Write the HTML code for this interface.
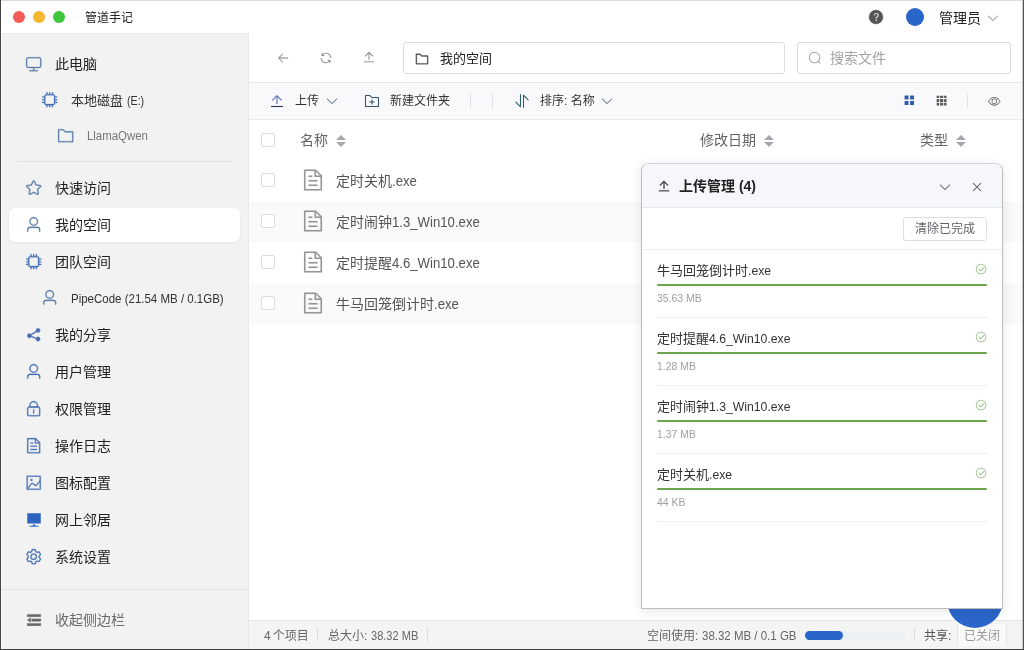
<!DOCTYPE html>
<html lang="zh-CN">
<head>
<meta charset="utf-8">
<title>管道手记</title>
<style>
*{box-sizing:border-box;margin:0;padding:0}
html,body{width:1024px;height:650px;overflow:hidden;background:#fff}
body{font-family:"Liberation Sans","Noto Sans CJK SC",sans-serif;color:#333;position:relative;font-size:13px}
.abs{position:absolute}
svg{display:block;position:absolute;overflow:visible}
.t{position:absolute;white-space:nowrap;line-height:20px;height:20px;will-change:transform}
.l{display:inline-block;transform-origin:0 50%}
.cu,.cd{position:absolute;width:0;height:0;border:5px solid transparent}
.cu{border-bottom-color:#a7a8ab;border-top-width:0}
.cd{border-top-color:#a7a8ab;border-bottom-width:0}
.cb{position:absolute;width:14px;height:14px;border:1px solid #dedede;border-radius:2px;background:#fff}
</style>
</head>
<body>
<div class="abs" style="left:0px;top:0px;width:1024px;height:650px;background:#fff"></div>
<div class="abs" style="left:1px;top:33px;width:1px;height:616px;background:#fbfbfb"></div>
<div class="abs" style="left:2px;top:33px;width:246px;height:616px;background:#f2f2f2"></div>
<div class="abs" style="left:2px;top:33px;width:246px;height:1px;background:#ececec"></div>
<div class="abs" style="left:248px;top:33px;width:1px;height:616px;background:#e9e9e9"></div>
<div class="abs" style="left:249px;top:82px;width:774px;height:1px;background:#e6e6e6"></div>
<div class="abs" style="left:249px;top:83px;width:774px;height:36px;background:#f9f9fb"></div>
<div class="abs" style="left:249px;top:119px;width:774px;height:1px;background:#e9e9e9"></div>
<div class="abs" style="left:249px;top:202px;width:774px;height:39.5px;background:#fafafa"></div>
<div class="abs" style="left:249px;top:283.5px;width:774px;height:40px;background:#fafafa"></div>
<div class="abs" style="left:249px;top:620px;width:774px;height:29px;background:#f4f4f4;border-top:1px solid #e4e4e4"></div>
<div class="abs" style="left:13px;top:11px;width:12px;height:12px;border-radius:50%;background:#f25b57"></div>
<div class="abs" style="left:33px;top:11px;width:12px;height:12px;border-radius:50%;background:#f6b62d"></div>
<div class="abs" style="left:53px;top:11px;width:12px;height:12px;border-radius:50%;background:#3ec63c"></div>
<div class="t" style="left:85px;top:7.5px;font-size:12px;color:#222;">管道手记</div>
<svg style="left:868px;top:9px" width="16" height="16" viewBox="0 0 1024 1024" fill="#555" stroke="#555" stroke-width="22" stroke-linejoin="round"><path d="M512 64a448 448 0 1 1 0 896 448 448 0 0 1 0-896m23.744 191.488c-52.096 0-92.928 14.784-123.2 44.352-30.976 29.568-45.76 70.4-45.76 122.496h80.256c0-29.568 5.632-52.8 17.6-68.992 13.376-19.712 35.2-28.864 66.176-28.864 23.936 0 42.944 6.336 56.32 19.712 12.672 13.376 19.712 31.68 19.712 54.912 0 17.6-6.336 34.496-19.008 49.984l-8.448 9.856c-45.76 40.832-73.216 70.4-82.368 89.408-9.856 19.008-14.08 42.24-14.08 68.992v9.856h80.96v-9.856c0-16.896 3.52-31.68 10.56-45.76 6.336-12.672 15.488-24.64 28.16-35.2 33.792-29.568 54.208-48.576 60.544-55.616 16.896-22.528 26.048-51.392 26.048-86.592 0-42.944-14.08-76.736-42.24-101.376-28.16-25.344-65.472-37.312-111.232-37.312zm-12.672 406.208a54.272 54.272 0 0 0-38.72 14.784 49.408 49.408 0 0 0-15.488 38.016c0 15.488 4.928 28.16 15.488 38.016A54.848 54.848 0 0 0 523.072 768c15.488 0 28.16-4.928 38.72-14.784a51.52 51.52 0 0 0 16.192-38.72 51.968 51.968 0 0 0-15.488-38.016 55.936 55.936 0 0 0-39.424-14.784z"/></svg>
<div class="abs" style="left:906px;top:8px;width:18px;height:18px;border-radius:50%;background:#2a66c9"></div>
<div class="t" style="left:939px;top:7.5px;font-size:14px;color:#222;">管理员</div>
<svg style="left:986px;top:10.5px" width="14" height="14" viewBox="0 0 1024 1024" fill="#8c8c8c" stroke="#8c8c8c" stroke-width="4" stroke-linejoin="round"><path d="M831.872 340.864 512 652.672 192.128 340.864a30.592 30.592 0 0 0-42.752 0 29.12 29.12 0 0 0 0 41.6L489.664 714.24a32 32 0 0 0 44.672 0l340.288-331.712a29.12 29.12 0 0 0 0-41.728 30.592 30.592 0 0 0-42.752 0z"/></svg>
<div class="abs" style="left:9px;top:207.5px;width:231px;height:34px;background:#fff;border-radius:6px;box-shadow:0 1px 3px rgba(0,0,0,.06)"></div>
<svg style="left:25.3px;top:55.3px" width="17.4" height="17.4" viewBox="0 0 1024 1024" fill="#5b7ea8" stroke="#5b7ea8" stroke-width="16" stroke-linejoin="round"><path d="M544 768v128h192a32 32 0 1 1 0 64H288a32 32 0 1 1 0-64h192V768H192A128 128 0 0 1 64 640V256a128 128 0 0 1 128-128h640a128 128 0 0 1 128 128v384a128 128 0 0 1-128 128zM192 192a64 64 0 0 0-64 64v384a64 64 0 0 0 64 64h640a64 64 0 0 0 64-64V256a64 64 0 0 0-64-64z"/></svg>
<div class="t" style="left:55px;top:54px;font-size:14px;color:#222;">此电脑</div>
<svg style="left:41.3px;top:91.3px" width="17.4" height="17.4" viewBox="0 0 1024 1024" fill="#4c74b8" stroke="#4c74b8" stroke-width="16" stroke-linejoin="round"><path d="M320 256a64 64 0 0 0-64 64v384a64 64 0 0 0 64 64h384a64 64 0 0 0 64-64V320a64 64 0 0 0-64-64zm0-64h384a128 128 0 0 1 128 128v384a128 128 0 0 1-128 128H320a128 128 0 0 1-128-128V320a128 128 0 0 1 128-128"/><path d="M512 64a32 32 0 0 1 32 32v128h-64V96a32 32 0 0 1 32-32m160 0a32 32 0 0 1 32 32v128h-64V96a32 32 0 0 1 32-32m-320 0a32 32 0 0 1 32 32v128h-64V96a32 32 0 0 1 32-32m160 896a32 32 0 0 1-32-32V800h64v128a32 32 0 0 1-32 32m160 0a32 32 0 0 1-32-32V800h64v128a32 32 0 0 1-32 32m-320 0a32 32 0 0 1-32-32V800h64v128a32 32 0 0 1-32 32M64 512a32 32 0 0 1 32-32h128v64H96a32 32 0 0 1-32-32m0-160a32 32 0 0 1 32-32h128v64H96a32 32 0 0 1-32-32m0 320a32 32 0 0 1 32-32h128v64H96a32 32 0 0 1-32-32m896-160a32 32 0 0 1-32 32H800v-64h128a32 32 0 0 1 32 32m0-160a32 32 0 0 1-32 32H800v-64h128a32 32 0 0 1 32 32m0 320a32 32 0 0 1-32 32H800v-64h128a32 32 0 0 1 32 32"/></svg>
<div class="t" style="left:71px;top:90.5px;font-size:13px;color:#333;">本地磁盘 <span class="l" style="transform:scaleX(0.82)">(E:)</span></div>
<svg style="left:57.3px;top:127.3px" width="17.4" height="17.4" viewBox="0 0 1024 1024" fill="#5b7ea8" stroke="#5b7ea8" stroke-width="16" stroke-linejoin="round"><path d="M128 192v640h768V320H485.76L357.504 192zm-32-64h287.872l128.384 128H928a32 32 0 0 1 32 32v576a32 32 0 0 1-32 32H96a32 32 0 0 1-32-32V160a32 32 0 0 1 32-32"/></svg>
<div class="t" style="left:87px;top:126px;font-size:12px;color:#777;"><span class="l" style="transform:scaleX(0.95)">LlamaQwen</span></div>
<div class="abs" style="left:17px;top:161px;width:215px;height:1px;background:#e2e2e2"></div>
<svg style="left:25.3px;top:179.3px" width="17.4" height="17.4" viewBox="0 0 1024 1024" fill="#5b7ea8" stroke="#5b7ea8" stroke-width="16" stroke-linejoin="round"><path d="m512 747.84 228.16 119.936a6.4 6.4 0 0 0 9.28-6.72l-43.52-254.08 184.512-179.904a6.4 6.4 0 0 0-3.52-10.88l-255.104-37.12L517.76 147.904a6.4 6.4 0 0 0-11.52 0L392.192 379.072l-255.104 37.12a6.4 6.4 0 0 0-3.52 10.88L318.08 606.976l-43.584 254.08a6.4 6.4 0 0 0 9.28 6.72zM313.6 924.48a70.4 70.4 0 0 1-102.144-74.24l37.888-220.928L88.96 472.96A70.4 70.4 0 0 1 128 352.896l221.76-32.256 99.2-200.96a70.4 70.4 0 0 1 126.208 0l99.2 200.96 221.824 32.256a70.4 70.4 0 0 1 39.04 120.064L774.72 629.376l37.888 220.928a70.4 70.4 0 0 1-102.144 74.24L512 820.096l-198.4 104.32z"/></svg>
<div class="t" style="left:55px;top:178px;font-size:14px;color:#222;">快速访问</div>
<svg style="left:25.3px;top:216.3px" width="17.4" height="17.4" viewBox="0 0 1024 1024" fill="#5b7ea8" stroke="#5b7ea8" stroke-width="16" stroke-linejoin="round"><path d="M512 512a192 192 0 1 0 0-384 192 192 0 0 0 0 384m0 64a256 256 0 1 1 0-512 256 256 0 0 1 0 512m320 320v-96a96 96 0 0 0-96-96H288a96 96 0 0 0-96 96v96a32 32 0 1 1-64 0v-96a160 160 0 0 1 160-160h448a160 160 0 0 1 160 160v96a32 32 0 1 1-64 0"/></svg>
<div class="t" style="left:55px;top:215px;font-size:14px;color:#222;">我的空间</div>
<svg style="left:25.3px;top:253.3px" width="17.4" height="17.4" viewBox="0 0 1024 1024" fill="#4c74b8" stroke="#4c74b8" stroke-width="16" stroke-linejoin="round"><path d="M320 256a64 64 0 0 0-64 64v384a64 64 0 0 0 64 64h384a64 64 0 0 0 64-64V320a64 64 0 0 0-64-64zm0-64h384a128 128 0 0 1 128 128v384a128 128 0 0 1-128 128H320a128 128 0 0 1-128-128V320a128 128 0 0 1 128-128"/><path d="M512 64a32 32 0 0 1 32 32v128h-64V96a32 32 0 0 1 32-32m160 0a32 32 0 0 1 32 32v128h-64V96a32 32 0 0 1 32-32m-320 0a32 32 0 0 1 32 32v128h-64V96a32 32 0 0 1 32-32m160 896a32 32 0 0 1-32-32V800h64v128a32 32 0 0 1-32 32m160 0a32 32 0 0 1-32-32V800h64v128a32 32 0 0 1-32 32m-320 0a32 32 0 0 1-32-32V800h64v128a32 32 0 0 1-32 32M64 512a32 32 0 0 1 32-32h128v64H96a32 32 0 0 1-32-32m0-160a32 32 0 0 1 32-32h128v64H96a32 32 0 0 1-32-32m0 320a32 32 0 0 1 32-32h128v64H96a32 32 0 0 1-32-32m896-160a32 32 0 0 1-32 32H800v-64h128a32 32 0 0 1 32 32m0-160a32 32 0 0 1-32 32H800v-64h128a32 32 0 0 1 32 32m0 320a32 32 0 0 1-32 32H800v-64h128a32 32 0 0 1 32 32"/></svg>
<div class="t" style="left:55px;top:252px;font-size:14px;color:#222;">团队空间</div>
<svg style="left:41.3px;top:289.3px" width="17.4" height="17.4" viewBox="0 0 1024 1024" fill="#5b7ea8" stroke="#5b7ea8" stroke-width="16" stroke-linejoin="round"><path d="M512 512a192 192 0 1 0 0-384 192 192 0 0 0 0 384m0 64a256 256 0 1 1 0-512 256 256 0 0 1 0 512m320 320v-96a96 96 0 0 0-96-96H288a96 96 0 0 0-96 96v96a32 32 0 1 1-64 0v-96a160 160 0 0 1 160-160h448a160 160 0 0 1 160 160v96a32 32 0 1 1-64 0"/></svg>
<div class="t" style="left:71px;top:288.5px;font-size:13px;color:#333;"><span class="l" style="transform:scaleX(0.884)">PipeCode (21.54 MB / 0.1GB)</span></div>
<svg style="left:25.3px;top:326.3px" width="17.4" height="17.4" viewBox="0 0 1024 1024" fill="#4a6fb0" stroke="#4a6fb0" stroke-width="16" stroke-linejoin="round"><path d="m679.872 348.8-301.76 188.608a127.808 127.808 0 0 1 5.12 52.16l279.936 104.96a128 128 0 1 1-22.464 59.904l-279.872-104.96a128 128 0 1 1-16.64-166.272l301.696-188.608a128 128 0 1 1 33.92 54.272z"/></svg>
<div class="t" style="left:55px;top:325px;font-size:14px;color:#222;">我的分享</div>
<svg style="left:25.3px;top:363.3px" width="17.4" height="17.4" viewBox="0 0 1024 1024" fill="#4c74b8" stroke="#4c74b8" stroke-width="16" stroke-linejoin="round"><path d="M512 512a192 192 0 1 0 0-384 192 192 0 0 0 0 384m0 64a256 256 0 1 1 0-512 256 256 0 0 1 0 512m320 320v-96a96 96 0 0 0-96-96H288a96 96 0 0 0-96 96v96a32 32 0 1 1-64 0v-96a160 160 0 0 1 160-160h448a160 160 0 0 1 160 160v96a32 32 0 1 1-64 0"/></svg>
<div class="t" style="left:55px;top:362px;font-size:14px;color:#222;">用户管理</div>
<svg style="left:25.3px;top:400.3px" width="17.4" height="17.4" viewBox="0 0 1024 1024" fill="#4c74b8" stroke="#4c74b8" stroke-width="16" stroke-linejoin="round"><path d="M224 448a32 32 0 0 0-32 32v384a32 32 0 0 0 32 32h576a32 32 0 0 0 32-32V480a32 32 0 0 0-32-32zm0-64h576a96 96 0 0 1 96 96v384a96 96 0 0 1-96 96H224a96 96 0 0 1-96-96V480a96 96 0 0 1 96-96"/><path d="M512 544a32 32 0 0 1 32 32v192a32 32 0 1 1-64 0V576a32 32 0 0 1 32-32m192-160v-64a192 192 0 1 0-384 0v64zM512 64a256 256 0 0 1 256 256v128H256V320A256 256 0 0 1 512 64"/></svg>
<div class="t" style="left:55px;top:399px;font-size:14px;color:#222;">权限管理</div>
<svg style="left:25.3px;top:437.3px" width="17.4" height="17.4" viewBox="0 0 1024 1024" fill="#4c74b8" stroke="#4c74b8" stroke-width="16" stroke-linejoin="round"><path d="M832 384H576V128H192v768h640zm-26.496-64L640 154.496V320zM160 64h480l256 256v608a32 32 0 0 1-32 32H160a32 32 0 0 1-32-32V96a32 32 0 0 1 32-32m160 448h384v64H320zm0-192h160v64H320zm0 384h384v64H320z"/></svg>
<div class="t" style="left:55px;top:436px;font-size:14px;color:#222;">操作日志</div>
<svg style="left:25.3px;top:474.3px" width="17.4" height="17.4" viewBox="0 0 1024 1024" fill="#4c74b8" stroke="#4c74b8" stroke-width="16" stroke-linejoin="round"><path d="M160 160v704h704V160zm-32-64h768a32 32 0 0 1 32 32v768a32 32 0 0 1-32 32H128a32 32 0 0 1-32-32V128a32 32 0 0 1 32-32"/><path d="M384 288q64 0 64 64t-64 64q-64 0-64-64t64-64M185.408 876.992l-50.816-38.912L350.72 556.032a96 96 0 0 1 134.592-17.856l1.856 1.472 122.88 99.136a32 32 0 0 0 44.992-4.864l216-269.888 49.92 39.936-215.808 269.824-.256.32a96 96 0 0 1-135.04 14.464l-122.88-99.072-.64-.512a32 32 0 0 0-44.8 5.952z"/></svg>
<div class="t" style="left:55px;top:473px;font-size:14px;color:#222;">图标配置</div>
<svg style="left:25px;top:511px" width="18" height="18" viewBox="0 0 1024 1024" fill="#2d64c0" stroke="#2d64c0" stroke-width="0" stroke-linejoin="round"><path d="M448 832v-64h128v64h192v64H256v-64zM128 704V128h768v576z"/></svg>
<div class="t" style="left:55px;top:510px;font-size:14px;color:#222;">网上邻居</div>
<svg style="left:25.3px;top:548.3px" width="17.4" height="17.4" viewBox="0 0 1024 1024" fill="#4c74b8" stroke="#4c74b8" stroke-width="16" stroke-linejoin="round"><path d="M600.704 64a32 32 0 0 1 30.464 22.208l35.2 109.376c14.784 7.232 28.928 15.36 42.432 24.512l112.384-24.192a32 32 0 0 1 34.432 15.36L944.32 364.8a32 32 0 0 1-4.032 37.504l-77.12 85.12a357.12 357.12 0 0 1 0 49.024l77.12 85.248a32 32 0 0 1 4.032 37.504l-88.704 153.6a32 32 0 0 1-34.432 15.296L708.8 803.904c-13.44 9.088-27.648 17.28-42.368 24.512l-35.264 109.376A32 32 0 0 1 600.704 960H423.296a32 32 0 0 1-30.464-22.208L357.696 828.48a351.616 351.616 0 0 1-42.56-24.64l-112.32 24.256a32 32 0 0 1-34.432-15.36L79.68 659.2a32 32 0 0 1 4.032-37.504l77.12-85.248a357.12 357.12 0 0 1 0-48.896l-77.12-85.248A32 32 0 0 1 79.68 364.8l88.704-153.6a32 32 0 0 1 34.432-15.296l112.32 24.256c13.568-9.152 27.776-17.408 42.56-24.64l35.2-109.312A32 32 0 0 1 423.232 64H600.64zm-23.424 64H446.72l-36.352 113.088-24.512 11.968a294.113 294.113 0 0 0-34.816 20.096l-22.656 15.36-116.224-25.088-65.28 113.152 79.68 88.192-1.92 27.136a293.12 293.12 0 0 0 0 40.192l1.92 27.136-79.808 88.192 65.344 113.152 116.224-25.024 22.656 15.296a294.113 294.113 0 0 0 34.816 20.096l24.512 11.968L446.72 896h130.688l36.48-113.152 24.448-11.904a288.282 288.282 0 0 0 34.752-20.096l22.592-15.296 116.288 25.024 65.28-113.152-79.744-88.192 1.92-27.136a293.12 293.12 0 0 0 0-40.256l-1.92-27.136 79.808-88.128-65.344-113.152-116.288 24.96-22.592-15.232a287.616 287.616 0 0 0-34.752-20.096l-24.448-11.904L577.344 128zM512 320a192 192 0 1 1 0 384 192 192 0 0 1 0-384m0 64a128 128 0 1 0 0 256 128 128 0 0 0 0-256"/></svg>
<div class="t" style="left:55px;top:547px;font-size:14px;color:#222;">系统设置</div>
<div class="abs" style="left:1px;top:589px;width:247px;height:1px;background:#e2e2e2"></div>
<svg style="left:25px;top:611px" width="18" height="18" viewBox="0 0 1024 1024" fill="#666" stroke="#666" stroke-width="22" stroke-linejoin="round"><path d="M896 192H128v128h768zm0 256H384v128h512zm0 256H128v128h768zM320 384 128 512l192 128z"/></svg>
<div class="t" style="left:55px;top:610px;font-size:14px;color:#6a6a6a;">收起侧边栏</div>
<svg style="left:276px;top:51px" width="14" height="14" viewBox="0 0 1024 1024" fill="#8a8a8a" stroke="#8a8a8a" stroke-width="6" stroke-linejoin="round"><path d="M224 480h640a32 32 0 1 1 0 64H224a32 32 0 0 1 0-64"/><path d="m237.248 512 265.408 265.344a32 32 0 0 1-45.312 45.312l-288-288a32 32 0 0 1 0-45.312l288-288a32 32 0 1 1 45.312 45.312z"/></svg>
<svg style="left:319px;top:51px" width="14" height="14" viewBox="0 0 1024 1024" fill="#8a8a8a" stroke="#8a8a8a" stroke-width="6" stroke-linejoin="round"><path d="M771.776 794.88A384 384 0 0 1 128 512h64a320 320 0 0 0 555.712 216.448H654.72a32 32 0 1 1 0-64h149.056a32 32 0 0 1 32 32v148.928a32 32 0 1 1-64 0v-50.56zM276.288 295.616h92.992a32 32 0 0 1 0 64H220.16a32 32 0 0 1-32-32V178.56a32 32 0 0 1 64 0v50.56A384 384 0 0 1 896.128 512h-64a320 320 0 0 0-555.776-216.384z"/></svg>
<svg style="left:362px;top:50px" width="14" height="14" viewBox="0 0 1024 1024" fill="#8a8a8a" stroke="#8a8a8a" stroke-width="6" stroke-linejoin="round"><path d="M160 832h704a32 32 0 1 1 0 64H160a32 32 0 1 1 0-64m384-578.304V704h-64V247.296L237.248 490.048 192 444.8 508.8 128l316.8 316.8-45.312 45.248z"/></svg>
<div class="abs" style="left:403px;top:42px;width:382px;height:32px;border:1px solid #dcdcdc;border-radius:3px;background:#fff"></div>
<svg style="left:415px;top:51.5px" width="14" height="14" viewBox="0 0 1024 1024" fill="#444" stroke="#444" stroke-width="22" stroke-linejoin="round"><path d="M128 192v640h768V320H485.76L357.504 192zm-32-64h287.872l128.384 128H928a32 32 0 0 1 32 32v576a32 32 0 0 1-32 32H96a32 32 0 0 1-32-32V160a32 32 0 0 1 32-32"/></svg>
<div class="t" style="left:440px;top:48.5px;font-size:13px;color:#222;">我的空间</div>
<div class="abs" style="left:797px;top:42px;width:214px;height:32px;border:1px solid #dcdcdc;border-radius:3px;background:#fff"></div>
<svg style="left:808px;top:51px" width="14" height="14" viewBox="0 0 1024 1024" fill="#a0a0a0" stroke="#a0a0a0" stroke-width="0" stroke-linejoin="round"><path d="m795.904 750.72 124.992 124.928a32 32 0 0 1-45.248 45.248L750.656 795.904a416 416 0 1 1 45.248-45.248zM480 832a352 352 0 1 0 0-704 352 352 0 0 0 0 704"/></svg>
<div class="t" style="left:830px;top:48px;font-size:14px;color:#a3a3a3;">搜索文件</div>
<svg style="left:269px;top:93px" width="16" height="16" viewBox="0 0 1024 1024" fill="#5873b4" stroke="#5873b4" stroke-width="8" stroke-linejoin="round"><path d="M544 253.696V704h-64V247.296L237.248 490.048 192 444.8 508.8 128l316.8 316.8-45.312 45.248z"/></svg>
<svg style="left:269px;top:93px" width="16" height="16" viewBox="0 0 1024 1024" fill="#2a3a5a" stroke="#2a3a5a" stroke-width="8" stroke-linejoin="round"><path d="M160 832h704a32 32 0 1 1 0 64H160a32 32 0 1 1 0-64"/></svg>
<div class="t" style="left:295px;top:91.4px;font-size:12px;color:#333;">上传</div>
<svg style="left:325px;top:94px" width="14" height="14" viewBox="0 0 1024 1024" fill="#5a6a7a" stroke="#5a6a7a" stroke-width="6" stroke-linejoin="round"><path d="M831.872 340.864 512 652.672 192.128 340.864a30.592 30.592 0 0 0-42.752 0 29.12 29.12 0 0 0 0 41.6L489.664 714.24a32 32 0 0 0 44.672 0l340.288-331.712a29.12 29.12 0 0 0 0-41.728 30.592 30.592 0 0 0-42.752 0z"/></svg>
<svg style="left:363.5px;top:93px" width="16" height="16" viewBox="0 0 1024 1024" fill="#3b5568" stroke="#3b5568" stroke-width="4" stroke-linejoin="round"><path d="M128 192v640h768V320H485.76L357.504 192zm-32-64h287.872l128.384 128H928a32 32 0 0 1 32 32v576a32 32 0 0 1-32 32H96a32 32 0 0 1-32-32V160a32 32 0 0 1 32-32m384 416V416h64v128h128v64H544v128h-64V608H352v-64z"/></svg>
<div class="t" style="left:389.6px;top:91.4px;font-size:12px;color:#333;">新建文件夹</div>
<div class="abs" style="left:470px;top:93px;width:1px;height:16px;background:#e0e2e6"></div>
<div class="abs" style="left:492px;top:93px;width:1px;height:16px;background:#e0e2e6"></div>
<svg style="left:514px;top:93px" width="16" height="16" viewBox="0 0 1024 1024" fill="#2f6072" stroke="#2f6072" stroke-width="4" stroke-linejoin="round"><path d="M384 96a32 32 0 0 1 64 0v786.752a32 32 0 0 1-54.592 22.656L95.936 608a32 32 0 0 1 0-45.312h.128a32 32 0 0 1 45.184 0L384 805.632zm192 45.248a32 32 0 0 1 54.592-22.592L928.064 416a32 32 0 0 1 0 45.312h-.128a32 32 0 0 1-45.184 0L640 218.496V928a32 32 0 1 1-64 0z"/></svg>
<div class="t" style="left:539.5px;top:91.4px;font-size:12px;color:#333;">排序: 名称</div>
<svg style="left:600px;top:94px" width="14" height="14" viewBox="0 0 1024 1024" fill="#5a6a7a" stroke="#5a6a7a" stroke-width="6" stroke-linejoin="round"><path d="M831.872 340.864 512 652.672 192.128 340.864a30.592 30.592 0 0 0-42.752 0 29.12 29.12 0 0 0 0 41.6L489.664 714.24a32 32 0 0 0 44.672 0l340.288-331.712a29.12 29.12 0 0 0 0-41.728 30.592 30.592 0 0 0-42.752 0z"/></svg>
<svg style="left:902.7px;top:94.4px" width="12.6" height="12.6" viewBox="0 0 1024 1024" fill="#2e5cab" stroke="#2e5cab" stroke-width="0" stroke-linejoin="round"><path d="M160 448a32 32 0 0 1-32-32V160.064a32 32 0 0 1 32-32h256a32 32 0 0 1 32 32V416a32 32 0 0 1-32 32zm448 0a32 32 0 0 1-32-32V160.064a32 32 0 0 1 32-32h255.936a32 32 0 0 1 32 32V416a32 32 0 0 1-32 32zM160 896a32 32 0 0 1-32-32V608a32 32 0 0 1 32-32h256a32 32 0 0 1 32 32v256a32 32 0 0 1-32 32zm448 0a32 32 0 0 1-32-32V608a32 32 0 0 1 32-32h255.936a32 32 0 0 1 32 32v256a32 32 0 0 1-32 32z"/></svg>
<svg style="left:935.4px;top:94.2px" width="13.2" height="13.2" viewBox="0 0 1024 1024" fill="#5c5c5c" stroke="#5c5c5c" stroke-width="0" stroke-linejoin="round"><path d="M640 384v256H384V384zm64 0h192v256H704zm-64 512H384V704h256zm64 0V704h192v192zm-64-768v192H384V128zm64 0h192v192H704zM320 384v256H128V384zm0 512H128V704h192zm0-768v192H128V128z"/></svg>
<div class="abs" style="left:967px;top:94px;width:1px;height:14px;background:#e0e2e6"></div>
<svg style="left:987.7px;top:94.5px" width="12.6" height="12.6" viewBox="0 0 1024 1024" fill="#666" stroke="#666" stroke-width="0" stroke-linejoin="round"><path d="M512 160c320 0 512 352 512 352S832 864 512 864 0 512 0 512s192-352 512-352m0 64c-225.28 0-384.128 208.064-436.8 288 52.608 79.872 211.456 288 436.8 288 225.28 0 384.128-208.064 436.8-288-52.608-79.872-211.456-288-436.8-288zm0 64a224 224 0 1 1 0 448 224 224 0 0 1 0-448m0 64a160.192 160.192 0 0 0-160 160c0 88.192 71.744 160 160 160s160-71.808 160-160-71.744-160-160-160"/></svg>
<div class="cb" style="left:261px;top:133px"></div>
<div class="t" style="left:300px;top:129.5px;font-size:14px;color:#636363;">名称</div>
<div class="cu" style="left:336px;top:134.5px"></div><div class="cd" style="left:336px;top:141.5px"></div>
<div class="t" style="left:700px;top:129.5px;font-size:14px;color:#636363;">修改日期</div>
<div class="cu" style="left:764px;top:134.5px"></div><div class="cd" style="left:764px;top:141.5px"></div>
<div class="t" style="left:920px;top:129.5px;font-size:14px;color:#636363;">类型</div>
<div class="cu" style="left:956px;top:134.5px"></div><div class="cd" style="left:956px;top:141.5px"></div>
<div class="cb" style="left:261px;top:173px"></div>
<svg style="left:300.5px;top:168px" width="24" height="24" viewBox="0 0 1024 1024" fill="#979797" stroke="#979797" stroke-width="6" stroke-linejoin="round"><path d="M832 384H576V128H192v768h640zm-26.496-64L640 154.496V320zM160 64h480l256 256v608a32 32 0 0 1-32 32H160a32 32 0 0 1-32-32V96a32 32 0 0 1 32-32m160 448h384v64H320zm0-192h160v64H320zm0 384h384v64H320z"/></svg>
<div class="t" style="left:336px;top:171px;font-size:14px;color:#555;">定时关机<span class="l" style="transform:scaleX(0.94)">.exe</span></div>
<div class="cb" style="left:261px;top:214px"></div>
<svg style="left:300.5px;top:209px" width="24" height="24" viewBox="0 0 1024 1024" fill="#979797" stroke="#979797" stroke-width="6" stroke-linejoin="round"><path d="M832 384H576V128H192v768h640zm-26.496-64L640 154.496V320zM160 64h480l256 256v608a32 32 0 0 1-32 32H160a32 32 0 0 1-32-32V96a32 32 0 0 1 32-32m160 448h384v64H320zm0-192h160v64H320zm0 384h384v64H320z"/></svg>
<div class="t" style="left:336px;top:212px;font-size:14px;color:#555;">定时闹钟<span class="l" style="transform:scaleX(0.94)">1.3_Win10.exe</span></div>
<div class="cb" style="left:261px;top:255px"></div>
<svg style="left:300.5px;top:250px" width="24" height="24" viewBox="0 0 1024 1024" fill="#979797" stroke="#979797" stroke-width="6" stroke-linejoin="round"><path d="M832 384H576V128H192v768h640zm-26.496-64L640 154.496V320zM160 64h480l256 256v608a32 32 0 0 1-32 32H160a32 32 0 0 1-32-32V96a32 32 0 0 1 32-32m160 448h384v64H320zm0-192h160v64H320zm0 384h384v64H320z"/></svg>
<div class="t" style="left:336px;top:253px;font-size:14px;color:#555;">定时提醒<span class="l" style="transform:scaleX(0.94)">4.6_Win10.exe</span></div>
<div class="cb" style="left:261px;top:296px"></div>
<svg style="left:300.5px;top:291px" width="24" height="24" viewBox="0 0 1024 1024" fill="#979797" stroke="#979797" stroke-width="6" stroke-linejoin="round"><path d="M832 384H576V128H192v768h640zm-26.496-64L640 154.496V320zM160 64h480l256 256v608a32 32 0 0 1-32 32H160a32 32 0 0 1-32-32V96a32 32 0 0 1 32-32m160 448h384v64H320zm0-192h160v64H320zm0 384h384v64H320z"/></svg>
<div class="t" style="left:336px;top:294px;font-size:14px;color:#555;">牛马回笼倒计时<span class="l" style="transform:scaleX(0.94)">.exe</span></div>
<div class="t" style="left:263.5px;top:625.8px;font-size:12px;color:#666;"><span style="letter-spacing:-.6px">4 </span>个项目</div>
<div class="abs" style="left:317px;top:628px;width:1px;height:14px;background:#ddd"></div>
<div class="t" style="left:328px;top:625.8px;font-size:12px;color:#666;">总大小: <span class="l" style="transform:scaleX(0.92)">38.32 MB</span></div>
<div class="abs" style="left:427px;top:628px;width:1px;height:14px;background:#ddd"></div>
<div class="t" style="left:647px;top:625.8px;font-size:12px;color:#666;">空间使用: <span class="l" style="transform:scaleX(0.957)">38.32 MB / 0.1 GB</span></div>
<div class="abs" style="left:805px;top:630.5px;width:100px;height:9px;background:#eceff4;border-radius:5px"></div>
<div class="abs" style="left:805px;top:630.5px;width:38px;height:9px;background:#2a66c9;border-radius:5px"></div>
<div class="abs" style="left:914px;top:628px;width:1px;height:14px;background:#ddd"></div>
<div class="t" style="left:924px;top:625.8px;font-size:12px;color:#555;">共享:</div>
<div class="abs" style="left:957px;top:624px;width:50px;height:22px;background:#f8f8f8;border-left:1px solid #e6e6e6;border-right:1px solid #e6e6e6"></div>
<div class="t" style="left:964px;top:625.8px;font-size:12px;color:#999;">已关闭</div>
<div class="abs" style="left:947px;top:572px;width:56px;height:56px;border-radius:50%;background:#2a66c9"></div>
<div class="abs" style="left:641px;top:163px;width:362px;height:446px;background:#fff;border:1px solid #bebebe;border-top-color:#d2d4d8;border-radius:8px 8px 0 0;box-shadow:0 2px 12px rgba(0,0,0,.10)"></div>
<div class="abs" style="left:642px;top:164px;width:360px;height:43px;background:#f5f7fa;border-radius:7px 7px 0 0"></div>
<div class="abs" style="left:642px;top:207px;width:360px;height:1px;background:#e4e7ed"></div>
<svg style="left:657px;top:179.3px" width="14" height="14" viewBox="0 0 1024 1024" fill="#333" stroke="#333" stroke-width="22" stroke-linejoin="round"><path d="M160 832h704a32 32 0 1 1 0 64H160a32 32 0 1 1 0-64m384-578.304V704h-64V247.296L237.248 490.048 192 444.8 508.8 128l316.8 316.8-45.312 45.248z"/></svg>
<div class="t" style="left:679px;top:176.3px;font-size:14px;color:#222;font-weight:bold">上传管理 (4)</div>
<svg style="left:938px;top:180px" width="14" height="14" viewBox="0 0 1024 1024" fill="#555" stroke="#555" stroke-width="8" stroke-linejoin="round"><path d="M831.872 340.864 512 652.672 192.128 340.864a30.592 30.592 0 0 0-42.752 0 29.12 29.12 0 0 0 0 41.6L489.664 714.24a32 32 0 0 0 44.672 0l340.288-331.712a29.12 29.12 0 0 0 0-41.728 30.592 30.592 0 0 0-42.752 0z"/></svg>
<svg style="left:970.3px;top:180px" width="14" height="14" viewBox="0 0 1024 1024" fill="#555" stroke="#555" stroke-width="8" stroke-linejoin="round"><path d="M764.288 214.592 512 466.88 259.712 214.592a31.936 31.936 0 0 0-45.12 45.12L466.752 512 214.528 764.224a31.936 31.936 0 1 0 45.12 45.184L512 557.184l252.288 252.288a31.936 31.936 0 0 0 45.12-45.12L557.12 512.064l252.288-252.352a31.936 31.936 0 1 0-45.12-45.184z"/></svg>
<div class="abs" style="left:903px;top:217px;width:84px;height:24px;border:1px solid #dcdfe6;border-radius:3px;background:#fff"></div>
<div class="t" style="left:915px;top:219.2px;font-size:12px;color:#606266;">清除已完成</div>
<div class="abs" style="left:642px;top:249px;width:360px;height:1px;background:#eeeeee"></div>
<div class="t" style="left:657px;top:261.3px;font-size:13px;color:#333;">牛马回笼倒计时<span class="l" style="transform:scaleX(0.94)">.exe</span></div>
<svg style="left:975px;top:263px" width="12" height="12" viewBox="0 0 1024 1024" fill="#8db877" stroke="#8db877" stroke-width="0" stroke-linejoin="round"><path d="M512 896a384 384 0 1 0 0-768 384 384 0 0 0 0 768m0 64a448 448 0 1 1 0-896 448 448 0 0 1 0 896"/><path d="M745.344 361.344a32 32 0 0 1 45.312 45.312l-288 288a32 32 0 0 1-45.312 0l-160-160a32 32 0 1 1 45.312-45.312L480 626.752l265.344-265.408z"/></svg>
<div class="abs" style="left:657px;top:284px;width:330px;height:2px;background:#6ba64f;border-radius:1px"></div>
<div class="t" style="left:657px;top:288px;font-size:11px;color:#a0a0a0;"><span class="l" style="transform:scaleX(0.95)">35.63 MB</span></div>
<div class="abs" style="left:657px;top:317px;width:330px;height:1px;background:#efefef"></div>
<div class="t" style="left:657px;top:329.3px;font-size:13px;color:#333;">定时提醒<span class="l" style="transform:scaleX(0.94)">4.6_Win10.exe</span></div>
<svg style="left:975px;top:331px" width="12" height="12" viewBox="0 0 1024 1024" fill="#8db877" stroke="#8db877" stroke-width="0" stroke-linejoin="round"><path d="M512 896a384 384 0 1 0 0-768 384 384 0 0 0 0 768m0 64a448 448 0 1 1 0-896 448 448 0 0 1 0 896"/><path d="M745.344 361.344a32 32 0 0 1 45.312 45.312l-288 288a32 32 0 0 1-45.312 0l-160-160a32 32 0 1 1 45.312-45.312L480 626.752l265.344-265.408z"/></svg>
<div class="abs" style="left:657px;top:352px;width:330px;height:2px;background:#6ba64f;border-radius:1px"></div>
<div class="t" style="left:657px;top:356px;font-size:11px;color:#a0a0a0;"><span class="l" style="transform:scaleX(0.95)">1.28 MB</span></div>
<div class="abs" style="left:657px;top:385px;width:330px;height:1px;background:#efefef"></div>
<div class="t" style="left:657px;top:397.3px;font-size:13px;color:#333;">定时闹钟<span class="l" style="transform:scaleX(0.94)">1.3_Win10.exe</span></div>
<svg style="left:975px;top:399px" width="12" height="12" viewBox="0 0 1024 1024" fill="#8db877" stroke="#8db877" stroke-width="0" stroke-linejoin="round"><path d="M512 896a384 384 0 1 0 0-768 384 384 0 0 0 0 768m0 64a448 448 0 1 1 0-896 448 448 0 0 1 0 896"/><path d="M745.344 361.344a32 32 0 0 1 45.312 45.312l-288 288a32 32 0 0 1-45.312 0l-160-160a32 32 0 1 1 45.312-45.312L480 626.752l265.344-265.408z"/></svg>
<div class="abs" style="left:657px;top:420px;width:330px;height:2px;background:#6ba64f;border-radius:1px"></div>
<div class="t" style="left:657px;top:424px;font-size:11px;color:#a0a0a0;"><span class="l" style="transform:scaleX(0.95)">1.37 MB</span></div>
<div class="abs" style="left:657px;top:453px;width:330px;height:1px;background:#efefef"></div>
<div class="t" style="left:657px;top:465.3px;font-size:13px;color:#333;">定时关机<span class="l" style="transform:scaleX(0.94)">.exe</span></div>
<svg style="left:975px;top:467px" width="12" height="12" viewBox="0 0 1024 1024" fill="#8db877" stroke="#8db877" stroke-width="0" stroke-linejoin="round"><path d="M512 896a384 384 0 1 0 0-768 384 384 0 0 0 0 768m0 64a448 448 0 1 1 0-896 448 448 0 0 1 0 896"/><path d="M745.344 361.344a32 32 0 0 1 45.312 45.312l-288 288a32 32 0 0 1-45.312 0l-160-160a32 32 0 1 1 45.312-45.312L480 626.752l265.344-265.408z"/></svg>
<div class="abs" style="left:657px;top:488px;width:330px;height:2px;background:#6ba64f;border-radius:1px"></div>
<div class="t" style="left:657px;top:492px;font-size:11px;color:#a0a0a0;"><span class="l" style="transform:scaleX(0.95)">44 KB</span></div>
<div class="abs" style="left:657px;top:521px;width:330px;height:1px;background:#efefef"></div>
<div class="abs" style="left:0px;top:0px;width:1024px;height:1px;background:#dcdcdc"></div>
<div class="abs" style="left:0px;top:0px;width:1px;height:650px;background:#444"></div>
<div class="abs" style="left:1022px;top:0px;width:1px;height:650px;background:#c8c8c8"></div>
<div class="abs" style="left:1023px;top:0px;width:1px;height:650px;background:#555"></div>
<div class="abs" style="left:0px;top:649px;width:1024px;height:1px;background:#444"></div>
</body>
</html>
